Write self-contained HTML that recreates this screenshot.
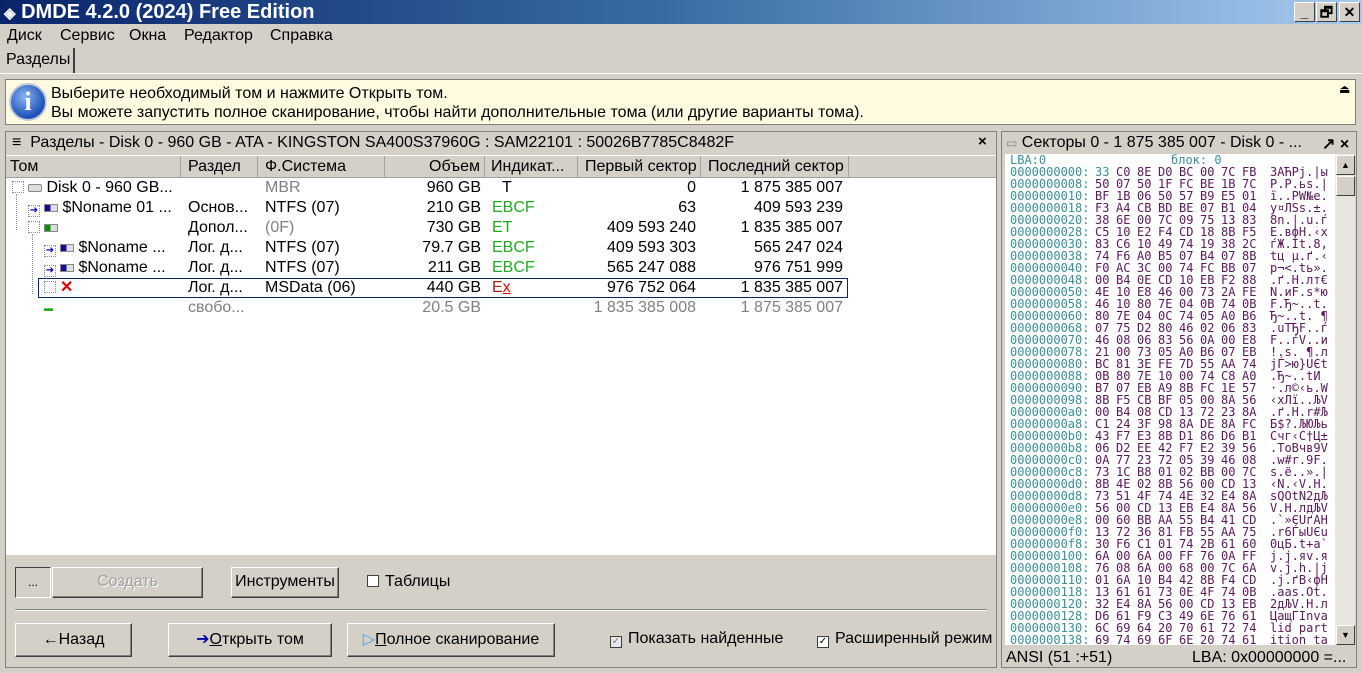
<!DOCTYPE html>
<html><head><meta charset="utf-8">
<style>
*{margin:0;padding:0;box-sizing:border-box}
body{width:1362px;height:673px;background:#d4d0c8;font-family:"Liberation Sans",sans-serif;font-size:16px;color:#000;position:relative;overflow:hidden}
.a{position:absolute;white-space:nowrap}
.title{left:0;top:0;width:1362px;height:24px;background:linear-gradient(90deg,#0a246a,#3a6ea5 50%,#a6caf0);color:#fff;font-weight:bold;font-size:20px;line-height:24px}
.wb{top:2px;width:21px;height:20px;background:#d4d0c8;border:1px solid;border-color:#fff #404040 #404040 #fff;font-size:14px;line-height:18px;text-align:center;color:#000;font-weight:bold}
.hdr{background:#d4d0c8;height:22px;line-height:22px;border-right:1px solid #a0a0a0;border-bottom:1px solid #a0a0a0;padding-left:4px;position:absolute;top:156px;white-space:nowrap}
.row{position:absolute;height:20px;line-height:20px;white-space:nowrap}
.btn{position:absolute;background:#d4d0c8;border:1px solid;border-color:#fff #404040 #404040 #fff;box-shadow:inset -1px -1px #808080;text-align:center;line-height:28px;height:31px;white-space:nowrap}
.cb{display:inline-block;width:12px;height:12px;border:1px solid #404040;background:#fff;vertical-align:-1px;margin-right:6px;font-size:10px;line-height:10px;text-align:center;color:#808080}
.ti{display:inline-block;width:12px;height:12px;border:1px dotted #888;vertical-align:-1px;margin-right:4px;font-size:10px;line-height:10px;color:#00a;text-align:center}
.g{color:#808080}.gr{color:#22aa22}
.hx{position:absolute;left:1010px;font-family:"DejaVu Sans Mono",monospace;font-size:12px;line-height:12px;height:12px;color:#5a1a5a;white-space:nowrap;width:325px}
.hx i{font-style:normal;position:absolute;top:0;white-space:nowrap}
.ad{color:#3a8e9a}
</style></head><body>
<div class="a title"><span style="margin-left:4px;font-size:15px">◈</span> DMDE 4.2.0 (2024) Free Edition</div>
<div class="a wb" style="left:1294px">_</div><div class="a wb" style="left:1316px">🗗</div><div class="a wb" style="left:1339px">✕</div>
<div class="a" style="left:7px;top:26px;line-height:20px">Диск</div>
<div class="a" style="left:60px;top:26px;line-height:20px">Сервис</div>
<div class="a" style="left:129px;top:26px;line-height:20px">Окна</div>
<div class="a" style="left:184px;top:26px;line-height:20px">Редактор</div>
<div class="a" style="left:270px;top:26px;line-height:20px">Справка</div>
<div class="a" style="left:0;top:48px;width:75px;height:26px;border-right:2px solid #404040;line-height:24px;padding-left:6px">Разделы</div>
<div class="a" style="left:0;top:73px;width:1362px;height:1px;background:#fff"></div>
<div class="a" style="left:5px;top:79px;width:1351px;height:46px;background:#fffbe0;border:1px solid #808080"></div>
<div class="a" style="left:9px;top:83px;width:38px;height:38px;border-radius:50%;background:radial-gradient(circle at 40% 35%,#8ab4f0,#1c4fb8 70%);border:2px solid #c0c8d8;color:#fff;font:bold 26px 'Liberation Serif',serif;text-align:center;line-height:34px">i</div>
<div class="a" style="left:51px;top:84px;line-height:19px">Выберите необходимый том и нажмите Открыть том.<br>Вы можете запустить полное сканирование, чтобы найти дополнительные тома (или другие варианты тома).</div>
<div class="a" style="left:1339px;top:82px;font-size:12px">⏏</div>

<div class="a" style="left:5px;top:131px;width:992px;height:537px;border:1px solid #808080"></div>
<div class="a" style="left:6px;top:132px;width:990px;height:22px;line-height:22px;padding-left:6px">≡ &nbsp;Разделы - Disk 0 - 960 GB - ATA - KINGSTON SA400S37960G : SAM22101 : 50026B7785C8482F</div>
<div class="a" style="left:978px;top:133px;font-size:15px;font-weight:bold">×</div>
<div class="a" style="left:6px;top:155px;width:990px;height:400px;background:#fff"></div>
<div class="hdr" style="left:6px;width:175px">Том</div>
<div class="hdr" style="left:181px;width:77px;padding-left:7px">Раздел</div>
<div class="hdr" style="left:258px;width:127px;padding-left:7px">Ф.Система</div>
<div class="hdr" style="left:385px;width:100px;text-align:right;padding-right:4px">Объем</div>
<div class="hdr" style="left:485px;width:93px;padding-left:6px">Индикат...</div>
<div class="hdr" style="left:578px;width:123px;padding-left:7px">Первый сектор</div>
<div class="hdr" style="left:701px;width:148px;padding-left:7px">Последний сектор</div>
<div class="hdr" style="left:849px;width:147px;border-right:none"></div>

<div class="a" style="left:16px;top:194px;height:36px;border-left:1px dotted #888"></div>
<div class="a" style="left:32px;top:234px;height:60px;border-left:1px dotted #888"></div>

<div class="row" style="left:12px;top:178px"><span class="ti"></span><span style="display:inline-block;width:14px;height:8px;background:#ddd;border:1px solid #888;border-radius:2px"></span> Disk 0 - 960 GB...</div>
<div class="row" style="left:28px;top:198px"><span class="ti">➔</span><span style="display:inline-block;width:14px;height:8px;background:linear-gradient(90deg,#10108a 45%,#ddd 45%);border:1px solid #888"></span> $Noname 01 ...</div>
<div class="row" style="left:28px;top:218px"><span class="ti"></span><span style="display:inline-block;width:14px;height:8px;background:linear-gradient(90deg,#108a10 45%,#ddd 45%);border:1px solid #888"></span></div>
<div class="row" style="left:44px;top:238px"><span class="ti">➔</span><span style="display:inline-block;width:14px;height:8px;background:linear-gradient(90deg,#10108a 45%,#ddd 45%);border:1px solid #888"></span> $Noname ...</div>
<div class="row" style="left:44px;top:258px"><span class="ti">➔</span><span style="display:inline-block;width:14px;height:8px;background:linear-gradient(90deg,#10108a 45%,#ddd 45%);border:1px solid #888"></span> $Noname ...</div>
<div class="a" style="left:38px;top:278px;width:810px;height:20px;border:1px solid #0a246a"></div>
<div class="row" style="left:44px;top:278px"><span class="ti"></span><span style="color:#d00;font-weight:bold">✕</span></div>
<div class="row" style="left:44px;top:298px;color:#2a2;font-size:9px">▬</div>

<div class="row" style="left:188px;top:198px">Основ...</div>
<div class="row" style="left:188px;top:218px">Допол...</div>
<div class="row" style="left:188px;top:238px">Лог. д...</div>
<div class="row" style="left:188px;top:258px">Лог. д...</div>
<div class="row" style="left:188px;top:278px">Лог. д...</div>
<div class="row g" style="left:188px;top:298px">свобо...</div>

<div class="row g" style="left:265px;top:178px">MBR</div>
<div class="row" style="left:265px;top:198px">NTFS (07)</div>
<div class="row g" style="left:265px;top:218px">(0F)</div>
<div class="row" style="left:265px;top:238px">NTFS (07)</div>
<div class="row" style="left:265px;top:258px">NTFS (07)</div>
<div class="row" style="left:265px;top:278px">MSData (06)</div>

<div class="row" style="left:385px;width:96px;text-align:right;top:178px">960 GB</div>
<div class="row" style="left:385px;width:96px;text-align:right;top:198px">210 GB</div>
<div class="row" style="left:385px;width:96px;text-align:right;top:218px">730 GB</div>
<div class="row" style="left:385px;width:96px;text-align:right;top:238px">79.7 GB</div>
<div class="row" style="left:385px;width:96px;text-align:right;top:258px">211 GB</div>
<div class="row" style="left:385px;width:96px;text-align:right;top:278px">440 GB</div>
<div class="row g" style="left:385px;width:96px;text-align:right;top:298px">20.5 GB</div>

<div class="row" style="left:502px;top:178px">T</div>
<div class="row gr" style="left:492px;top:198px">EBCF</div>
<div class="row gr" style="left:492px;top:218px">ET</div>
<div class="row gr" style="left:492px;top:238px">EBCF</div>
<div class="row gr" style="left:492px;top:258px">EBCF</div>
<div class="row" style="left:492px;top:278px;color:#a02020">E<u style="color:#e00">x</u></div>

<div class="row" style="left:578px;width:118px;text-align:right;top:178px">0</div>
<div class="row" style="left:578px;width:118px;text-align:right;top:198px">63</div>
<div class="row" style="left:578px;width:118px;text-align:right;top:218px">409 593 240</div>
<div class="row" style="left:578px;width:118px;text-align:right;top:238px">409 593 303</div>
<div class="row" style="left:578px;width:118px;text-align:right;top:258px">565 247 088</div>
<div class="row" style="left:578px;width:118px;text-align:right;top:278px">976 752 064</div>
<div class="row g" style="left:578px;width:118px;text-align:right;top:298px">1 835 385 008</div>

<div class="row" style="left:701px;width:142px;text-align:right;top:178px">1 875 385 007</div>
<div class="row" style="left:701px;width:142px;text-align:right;top:198px">409 593 239</div>
<div class="row" style="left:701px;width:142px;text-align:right;top:218px">1 835 385 007</div>
<div class="row" style="left:701px;width:142px;text-align:right;top:238px">565 247 024</div>
<div class="row" style="left:701px;width:142px;text-align:right;top:258px">976 751 999</div>
<div class="row" style="left:701px;width:142px;text-align:right;top:278px">1 835 385 007</div>
<div class="row g" style="left:701px;width:142px;text-align:right;top:298px">1 875 385 007</div>

<div class="btn" style="left:15px;top:567px;width:36px;font-size:12px;border-color:#404040 #fff #fff #404040;box-shadow:none">...</div>
<div class="btn" style="left:52px;top:567px;width:151px;color:#a0a0a0;text-shadow:1px 1px #fff">Создать</div>
<div class="btn" style="left:231px;top:567px;width:108px">Инструменты</div>
<div class="a" style="left:367px;top:573px"><span class="cb"></span>Таблицы</div>
<div class="a" style="left:15px;top:609px;width:972px;height:2px;border-top:1px solid #808080;border-bottom:1px solid #fff"></div>
<div class="btn" style="left:15px;top:623px;width:117px;height:34px;line-height:32px">←Назад</div>
<div class="btn" style="left:168px;top:623px;width:164px;height:34px;line-height:32px"><span style="color:#00a">➔</span><u>О</u>ткрыть том</div>
<div class="btn" style="left:347px;top:623px;width:208px;height:34px;line-height:32px"><span style="color:#4aa0e0">▷</span><u>П</u>олное сканирование</div>
<div class="a" style="left:610px;top:630px"><span class="cb" style="background:#e8e8e8">✓</span>Показать найденные</div>
<div class="a" style="left:817px;top:630px"><span class="cb" style="color:#000">✓</span>Расширенный режим</div>

<div class="a" style="left:1001px;top:131px;width:356px;height:537px;border:1px solid #808080"></div>
<div class="a" style="left:1006px;top:133px;line-height:20px;font-size:16px"><span style="color:#888;font-size:12px">▭</span> Секторы 0 - 1 875 385 007 - Disk 0 - ...</div>
<div class="a" style="left:1322px;top:134px;font-weight:bold">↗ ×</div>
<div class="a" style="left:1005px;top:154px;width:330px;height:491px;background:#fff"></div>
<div class="a" style="left:1335px;top:154px;width:20px;height:491px;background:#e8e6e0"></div>
<div class="a" style="left:1336px;top:155px;width:19px;height:20px;background:#d4d0c8;border:1px solid;border-color:#fff #404040 #404040 #fff;font-size:9px;text-align:center;line-height:18px">▲</div>
<div class="a" style="left:1336px;top:176px;width:19px;height:20px;background:#d4d0c8;border:1px solid;border-color:#fff #404040 #404040 #fff"></div>
<div class="a" style="left:1336px;top:625px;width:19px;height:20px;background:#d4d0c8;border:1px solid;border-color:#fff #404040 #404040 #fff;font-size:9px;text-align:center;line-height:18px">▼</div>
<div class="hx ad" style="top:154px">LBA:0<i style="left:161px">блок: 0</i></div>
<div class="a" style="left:1006px;top:649px;font-size:16px">ANSI (51 :+51)</div>
<div class="a" style="left:1192px;top:649px;font-size:16px">LBA: 0x00000000 =...</div>

<div class="hx" style="top:166px"><span class="ad">0000000000:</span><i style="left:85px;color:#3a8e9a">33</i><i style="left:106px">C0</i><i style="left:127px">8E</i><i style="left:148px">D0</i><i style="left:169px">BC</i><i style="left:190px">00</i><i style="left:211px">7C</i><i style="left:232px">FB</i><i style="left:260px">3AЋPj.|ы</i></div>
<div class="hx" style="top:178px"><span class="ad">0000000008:</span><i style="left:85px">50</i><i style="left:106px">07</i><i style="left:127px">50</i><i style="left:148px">1F</i><i style="left:169px">FC</i><i style="left:190px">BE</i><i style="left:211px">1B</i><i style="left:232px">7C</i><i style="left:260px">P.P.ьs.|</i></div>
<div class="hx" style="top:190px"><span class="ad">0000000010:</span><i style="left:85px">BF</i><i style="left:106px">1B</i><i style="left:127px">06</i><i style="left:148px">50</i><i style="left:169px">57</i><i style="left:190px">B9</i><i style="left:211px">E5</i><i style="left:232px">01</i><i style="left:260px">ї..PW№e.</i></div>
<div class="hx" style="top:202px"><span class="ad">0000000018:</span><i style="left:85px">F3</i><i style="left:106px">A4</i><i style="left:127px">CB</i><i style="left:148px">BD</i><i style="left:169px">BE</i><i style="left:190px">07</i><i style="left:211px">B1</i><i style="left:232px">04</i><i style="left:260px">у¤ЛЅs.±.</i></div>
<div class="hx" style="top:214px"><span class="ad">0000000020:</span><i style="left:85px">38</i><i style="left:106px">6E</i><i style="left:127px">00</i><i style="left:148px">7C</i><i style="left:169px">09</i><i style="left:190px">75</i><i style="left:211px">13</i><i style="left:232px">83</i><i style="left:260px">8n.|.u.ѓ</i></div>
<div class="hx" style="top:226px"><span class="ad">0000000028:</span><i style="left:85px">C5</i><i style="left:106px">10</i><i style="left:127px">E2</i><i style="left:148px">F4</i><i style="left:169px">CD</i><i style="left:190px">18</i><i style="left:211px">8B</i><i style="left:232px">F5</i><i style="left:260px">Е.вфН.‹х</i></div>
<div class="hx" style="top:238px"><span class="ad">0000000030:</span><i style="left:85px">83</i><i style="left:106px">C6</i><i style="left:127px">10</i><i style="left:148px">49</i><i style="left:169px">74</i><i style="left:190px">19</i><i style="left:211px">38</i><i style="left:232px">2C</i><i style="left:260px">ѓЖ.It.8,</i></div>
<div class="hx" style="top:250px"><span class="ad">0000000038:</span><i style="left:85px">74</i><i style="left:106px">F6</i><i style="left:127px">A0</i><i style="left:148px">B5</i><i style="left:169px">07</i><i style="left:190px">B4</i><i style="left:211px">07</i><i style="left:232px">8B</i><i style="left:260px">tц µ.ґ.‹</i></div>
<div class="hx" style="top:262px"><span class="ad">0000000040:</span><i style="left:85px">F0</i><i style="left:106px">AC</i><i style="left:127px">3C</i><i style="left:148px">00</i><i style="left:169px">74</i><i style="left:190px">FC</i><i style="left:211px">BB</i><i style="left:232px">07</i><i style="left:260px">р¬&lt;.tь».</i></div>
<div class="hx" style="top:274px"><span class="ad">0000000048:</span><i style="left:85px">00</i><i style="left:106px">B4</i><i style="left:127px">0E</i><i style="left:148px">CD</i><i style="left:169px">10</i><i style="left:190px">EB</i><i style="left:211px">F2</i><i style="left:232px">88</i><i style="left:260px">.ґ.Н.лт€</i></div>
<div class="hx" style="top:286px"><span class="ad">0000000050:</span><i style="left:85px">4E</i><i style="left:106px">10</i><i style="left:127px">E8</i><i style="left:148px">46</i><i style="left:169px">00</i><i style="left:190px">73</i><i style="left:211px">2A</i><i style="left:232px">FE</i><i style="left:260px">N.иF.s*ю</i></div>
<div class="hx" style="top:298px"><span class="ad">0000000058:</span><i style="left:85px">46</i><i style="left:106px">10</i><i style="left:127px">80</i><i style="left:148px">7E</i><i style="left:169px">04</i><i style="left:190px">0B</i><i style="left:211px">74</i><i style="left:232px">0B</i><i style="left:260px">F.Ђ~..t.</i></div>
<div class="hx" style="top:310px"><span class="ad">0000000060:</span><i style="left:85px">80</i><i style="left:106px">7E</i><i style="left:127px">04</i><i style="left:148px">0C</i><i style="left:169px">74</i><i style="left:190px">05</i><i style="left:211px">A0</i><i style="left:232px">B6</i><i style="left:260px">Ђ~..t. ¶</i></div>
<div class="hx" style="top:322px"><span class="ad">0000000068:</span><i style="left:85px">07</i><i style="left:106px">75</i><i style="left:127px">D2</i><i style="left:148px">80</i><i style="left:169px">46</i><i style="left:190px">02</i><i style="left:211px">06</i><i style="left:232px">83</i><i style="left:260px">.uТЂF..ѓ</i></div>
<div class="hx" style="top:334px"><span class="ad">0000000070:</span><i style="left:85px">46</i><i style="left:106px">08</i><i style="left:127px">06</i><i style="left:148px">83</i><i style="left:169px">56</i><i style="left:190px">0A</i><i style="left:211px">00</i><i style="left:232px">E8</i><i style="left:260px">F..ѓV..и</i></div>
<div class="hx" style="top:346px"><span class="ad">0000000078:</span><i style="left:85px">21</i><i style="left:106px">00</i><i style="left:127px">73</i><i style="left:148px">05</i><i style="left:169px">A0</i><i style="left:190px">B6</i><i style="left:211px">07</i><i style="left:232px">EB</i><i style="left:260px">!.s. ¶.л</i></div>
<div class="hx" style="top:358px"><span class="ad">0000000080:</span><i style="left:85px">BC</i><i style="left:106px">81</i><i style="left:127px">3E</i><i style="left:148px">FE</i><i style="left:169px">7D</i><i style="left:190px">55</i><i style="left:211px">AA</i><i style="left:232px">74</i><i style="left:260px">јЃ&gt;ю}UЄt</i></div>
<div class="hx" style="top:370px"><span class="ad">0000000088:</span><i style="left:85px">0B</i><i style="left:106px">80</i><i style="left:127px">7E</i><i style="left:148px">10</i><i style="left:169px">00</i><i style="left:190px">74</i><i style="left:211px">C8</i><i style="left:232px">A0</i><i style="left:260px">.Ђ~..tИ</i></div>
<div class="hx" style="top:382px"><span class="ad">0000000090:</span><i style="left:85px">B7</i><i style="left:106px">07</i><i style="left:127px">EB</i><i style="left:148px">A9</i><i style="left:169px">8B</i><i style="left:190px">FC</i><i style="left:211px">1E</i><i style="left:232px">57</i><i style="left:260px">·.л©‹ь.W</i></div>
<div class="hx" style="top:394px"><span class="ad">0000000098:</span><i style="left:85px">8B</i><i style="left:106px">F5</i><i style="left:127px">CB</i><i style="left:148px">BF</i><i style="left:169px">05</i><i style="left:190px">00</i><i style="left:211px">8A</i><i style="left:232px">56</i><i style="left:260px">‹хЛї..ЉV</i></div>
<div class="hx" style="top:406px"><span class="ad">00000000a0:</span><i style="left:85px">00</i><i style="left:106px">B4</i><i style="left:127px">08</i><i style="left:148px">CD</i><i style="left:169px">13</i><i style="left:190px">72</i><i style="left:211px">23</i><i style="left:232px">8A</i><i style="left:260px">.ґ.Н.r#Љ</i></div>
<div class="hx" style="top:418px"><span class="ad">00000000a8:</span><i style="left:85px">C1</i><i style="left:106px">24</i><i style="left:127px">3F</i><i style="left:148px">98</i><i style="left:169px">8A</i><i style="left:190px">DE</i><i style="left:211px">8A</i><i style="left:232px">FC</i><i style="left:260px">Б$?.ЉЮЉь</i></div>
<div class="hx" style="top:430px"><span class="ad">00000000b0:</span><i style="left:85px">43</i><i style="left:106px">F7</i><i style="left:127px">E3</i><i style="left:148px">8B</i><i style="left:169px">D1</i><i style="left:190px">86</i><i style="left:211px">D6</i><i style="left:232px">B1</i><i style="left:260px">Cчг‹С†Ц±</i></div>
<div class="hx" style="top:442px"><span class="ad">00000000b8:</span><i style="left:85px">06</i><i style="left:106px">D2</i><i style="left:127px">EE</i><i style="left:148px">42</i><i style="left:169px">F7</i><i style="left:190px">E2</i><i style="left:211px">39</i><i style="left:232px">56</i><i style="left:260px">.ТоBчв9V</i></div>
<div class="hx" style="top:454px"><span class="ad">00000000c0:</span><i style="left:85px">0A</i><i style="left:106px">77</i><i style="left:127px">23</i><i style="left:148px">72</i><i style="left:169px">05</i><i style="left:190px">39</i><i style="left:211px">46</i><i style="left:232px">08</i><i style="left:260px">.w#r.9F.</i></div>
<div class="hx" style="top:466px"><span class="ad">00000000c8:</span><i style="left:85px">73</i><i style="left:106px">1C</i><i style="left:127px">B8</i><i style="left:148px">01</i><i style="left:169px">02</i><i style="left:190px">BB</i><i style="left:211px">00</i><i style="left:232px">7C</i><i style="left:260px">s.ё..».|</i></div>
<div class="hx" style="top:478px"><span class="ad">00000000d0:</span><i style="left:85px">8B</i><i style="left:106px">4E</i><i style="left:127px">02</i><i style="left:148px">8B</i><i style="left:169px">56</i><i style="left:190px">00</i><i style="left:211px">CD</i><i style="left:232px">13</i><i style="left:260px">‹N.‹V.Н.</i></div>
<div class="hx" style="top:490px"><span class="ad">00000000d8:</span><i style="left:85px">73</i><i style="left:106px">51</i><i style="left:127px">4F</i><i style="left:148px">74</i><i style="left:169px">4E</i><i style="left:190px">32</i><i style="left:211px">E4</i><i style="left:232px">8A</i><i style="left:260px">sQOtN2дЉ</i></div>
<div class="hx" style="top:502px"><span class="ad">00000000e0:</span><i style="left:85px">56</i><i style="left:106px">00</i><i style="left:127px">CD</i><i style="left:148px">13</i><i style="left:169px">EB</i><i style="left:190px">E4</i><i style="left:211px">8A</i><i style="left:232px">56</i><i style="left:260px">V.Н.лдЉV</i></div>
<div class="hx" style="top:514px"><span class="ad">00000000e8:</span><i style="left:85px">00</i><i style="left:106px">60</i><i style="left:127px">BB</i><i style="left:148px">AA</i><i style="left:169px">55</i><i style="left:190px">B4</i><i style="left:211px">41</i><i style="left:232px">CD</i><i style="left:260px">.`»ЄUґAН</i></div>
<div class="hx" style="top:526px"><span class="ad">00000000f0:</span><i style="left:85px">13</i><i style="left:106px">72</i><i style="left:127px">36</i><i style="left:148px">81</i><i style="left:169px">FB</i><i style="left:190px">55</i><i style="left:211px">AA</i><i style="left:232px">75</i><i style="left:260px">.r6ЃыUЄu</i></div>
<div class="hx" style="top:538px"><span class="ad">00000000f8:</span><i style="left:85px">30</i><i style="left:106px">F6</i><i style="left:127px">C1</i><i style="left:148px">01</i><i style="left:169px">74</i><i style="left:190px">2B</i><i style="left:211px">61</i><i style="left:232px">60</i><i style="left:260px">0цБ.t+a`</i></div>
<div class="hx" style="top:550px"><span class="ad">0000000100:</span><i style="left:85px">6A</i><i style="left:106px">00</i><i style="left:127px">6A</i><i style="left:148px">00</i><i style="left:169px">FF</i><i style="left:190px">76</i><i style="left:211px">0A</i><i style="left:232px">FF</i><i style="left:260px">j.j.яv.я</i></div>
<div class="hx" style="top:562px"><span class="ad">0000000108:</span><i style="left:85px">76</i><i style="left:106px">08</i><i style="left:127px">6A</i><i style="left:148px">00</i><i style="left:169px">68</i><i style="left:190px">00</i><i style="left:211px">7C</i><i style="left:232px">6A</i><i style="left:260px">v.j.h.|j</i></div>
<div class="hx" style="top:574px"><span class="ad">0000000110:</span><i style="left:85px">01</i><i style="left:106px">6A</i><i style="left:127px">10</i><i style="left:148px">B4</i><i style="left:169px">42</i><i style="left:190px">8B</i><i style="left:211px">F4</i><i style="left:232px">CD</i><i style="left:260px">.j.ґB‹фН</i></div>
<div class="hx" style="top:586px"><span class="ad">0000000118:</span><i style="left:85px">13</i><i style="left:106px">61</i><i style="left:127px">61</i><i style="left:148px">73</i><i style="left:169px">0E</i><i style="left:190px">4F</i><i style="left:211px">74</i><i style="left:232px">0B</i><i style="left:260px">.aas.Ot.</i></div>
<div class="hx" style="top:598px"><span class="ad">0000000120:</span><i style="left:85px">32</i><i style="left:106px">E4</i><i style="left:127px">8A</i><i style="left:148px">56</i><i style="left:169px">00</i><i style="left:190px">CD</i><i style="left:211px">13</i><i style="left:232px">EB</i><i style="left:260px">2дЉV.Н.л</i></div>
<div class="hx" style="top:610px"><span class="ad">0000000128:</span><i style="left:85px">D6</i><i style="left:106px">61</i><i style="left:127px">F9</i><i style="left:148px">C3</i><i style="left:169px">49</i><i style="left:190px">6E</i><i style="left:211px">76</i><i style="left:232px">61</i><i style="left:260px">ЦащГInva</i></div>
<div class="hx" style="top:622px"><span class="ad">0000000130:</span><i style="left:85px">6C</i><i style="left:106px">69</i><i style="left:127px">64</i><i style="left:148px">20</i><i style="left:169px">70</i><i style="left:190px">61</i><i style="left:211px">72</i><i style="left:232px">74</i><i style="left:260px">lid part</i></div>
<div class="hx" style="top:634px"><span class="ad">0000000138:</span><i style="left:85px">69</i><i style="left:106px">74</i><i style="left:127px">69</i><i style="left:148px">6F</i><i style="left:169px">6E</i><i style="left:190px">20</i><i style="left:211px">74</i><i style="left:232px">61</i><i style="left:260px">ition ta</i></div>
</body></html>
